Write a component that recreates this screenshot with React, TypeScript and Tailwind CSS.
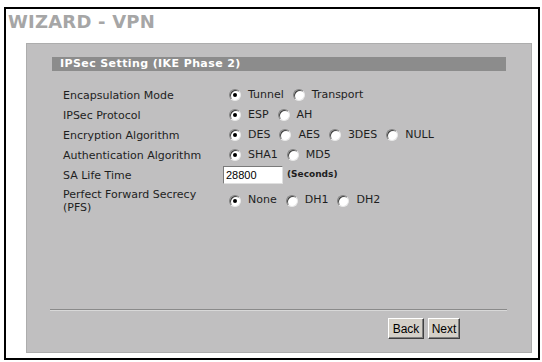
import React from "react";

function Radio({ checked }: { checked?: boolean }) {
  return (
    <span className="relative inline-block w-[12px] h-[12px] rounded-full bg-white border border-t-[#808080] border-l-[#808080] border-r-[#e8e8e8] border-b-[#e8e8e8] shadow-[inset_1px_1px_0_#404040] shrink-0">
      {checked && (
        <span className="absolute left-[3px] top-[3px] w-[4px] h-[4px] rounded-full bg-black" />
      )}
    </span>
  );
}

function Options({ items, selected }: { items: string[]; selected: number }) {
  return (
    <div className="flex items-center gap-[9px]">
      {items.map((label, i) => (
        <label key={label} className="flex items-center gap-[7px]">
          <Radio checked={i === selected} />
          <span>{label}</span>
        </label>
      ))}
    </div>
  );
}

function Row({ label, children, className = "" }: { label: React.ReactNode; children: React.ReactNode; className?: string }) {
  return (
    <div className={"flex items-center min-h-[20px] " + className}>
      <div className="w-[166px] shrink-0 leading-[13px]">{label}</div>
      <div>{children}</div>
    </div>
  );
}

export default function App() {
  return (
    <div className="w-[542px] h-[362px] bg-white pt-[7px] pl-[4px] font-['DejaVu_Sans',sans-serif]">
      <div className="w-[536px] h-[353px] border-2 border-black flex flex-col">
        <h1 className="pl-[2px] mt-[2px] h-[22px] leading-[22px] text-[18px] font-bold text-[#a6a6a6] tracking-[0.2px]">
          WIZARD - VPN
        </h1>
        <div className="ml-[20px] mt-[10px] w-[506px] h-[310px] bg-[#c0bfc0] border border-[#adadad] flex flex-col">
          <div className="ml-[25px] mt-[13px] w-[454px] h-[14px] bg-[#8c8c8c] pl-[8px] text-[11px] leading-[14px] font-bold text-white tracking-[0.4px]">
            IPSec Setting (IKE Phase 2)
          </div>
          <div className="ml-[36px] mt-[14px] flex flex-col text-[11px] text-[#1e1e1e]">
            <Row label="Encapsulation Mode">
              <Options items={["Tunnel", "Transport"]} selected={0} />
            </Row>
            <Row label="IPSec Protocol">
              <Options items={["ESP", "AH"]} selected={0} />
            </Row>
            <Row label="Encryption Algorithm">
              <Options items={["DES", "AES", "3DES", "NULL"]} selected={0} />
            </Row>
            <Row label="Authentication Algorithm">
              <Options items={["SHA1", "MD5"]} selected={0} />
            </Row>
            <Row label="SA Life Time">
              <div className="flex items-center -ml-[6px]">
                <input
                  readOnly
                  value="28800"
                  className="w-[60px] h-[18px] bg-white border border-t-[#7a7a7a] border-l-[#7a7a7a] border-r-[#e0e0e0] border-b-[#e0e0e0] px-[2px] text-[11px] font-['Liberation_Sans',sans-serif] text-black outline-none"
                />
                <span className="ml-[4px] text-[9px] font-bold">(Seconds)</span>
              </div>
            </Row>
            <Row
              className="mt-[2px]"
              label={
                <span className="block pt-[1px]">
                  Perfect Forward Secrecy
                  <br />
                  (PFS)
                </span>
              }
            >
              <Options items={["None", "DH1", "DH2"]} selected={0} />
            </Row>
          </div>
          <div className="flex-1" />
          <div className="ml-[23px] w-[457px] border-t border-[#8a8a8a] border-b border-b-[#d8d8d8]" />
          <div className="flex justify-end gap-[4px] mr-[71px] mt-[7px] mb-[13px]">
            <button className="w-[36px] h-[21px] bg-[#d4d0c8] border border-t-white border-l-white border-r-[#404040] border-b-[#404040] shadow-[inset_-1px_-1px_0_#808080] text-[12px] font-['Liberation_Sans',sans-serif] text-black">
              Back
            </button>
            <button className="w-[32px] h-[21px] bg-[#d4d0c8] border border-t-white border-l-white border-r-[#404040] border-b-[#404040] shadow-[inset_-1px_-1px_0_#808080] text-[12px] font-['Liberation_Sans',sans-serif] text-black">
              Next
            </button>
          </div>
        </div>
      </div>
    </div>
  );
}
